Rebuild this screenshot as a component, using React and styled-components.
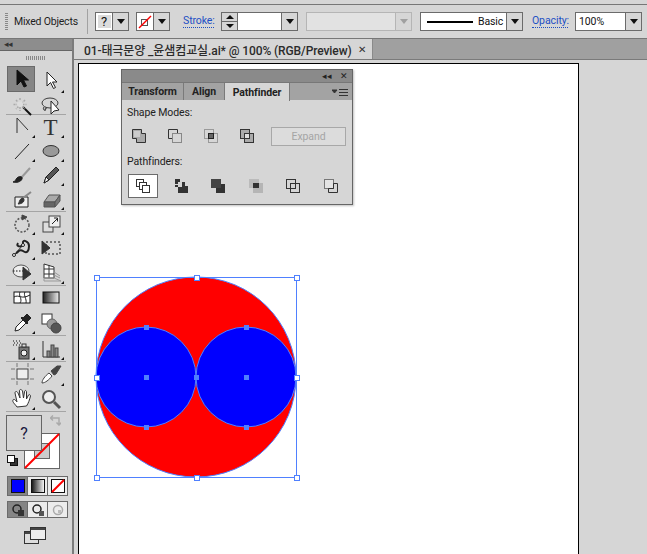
import React from "react"
import styled, { createGlobalStyle } from "styled-components"

const GRAY = "#d6d6d6"
const LINE = "#6b6b6b"
const SEL = "#4f80ff"

const Global = createGlobalStyle`
	html, body { margin: 0; padding: 0; background: ${GRAY}; }
	body { font-family: "Roboto", "Noto Sans CJK KR", sans-serif; font-size: 10.5px; letter-spacing: -0.1px; color: #1e1e1e; }
`

const Page = styled.div`
	width: 647px;
	height: 554px;
	overflow: hidden;
	display: flex;
	flex-direction: column;
	background: ${GRAY};
`

const ControlBar = styled.div`
	height: 33px;
	margin-top: 4px;
	border-top: 1px solid #777;
	border-bottom: 1px solid #777;
	display: flex;
	align-items: center;
	padding-left: 5px;
	flex-shrink: 0;
`

const Gripper = styled.div`
	width: 3px;
	height: 17px;
	background: repeating-linear-gradient(to bottom, #888 0 1px, transparent 1px 2px);
`

const BarLabel = styled.span`
	margin-left: 6px;
	width: 70px;
	white-space: nowrap;
	letter-spacing: -0.2px;
`

const BarDivider = styled.div`
	width: 1px;
	height: 25px;
	background: #a2a2a2;
	margin: 0 7px 0 3px;
`

const Combo = styled.div`
	display: flex;
	height: 19px;
	width: ${p => p.$w}px;
	margin-left: ${p => p.$ml || 0}px;
	border: 1px solid ${LINE};
	box-sizing: border-box;
	background: ${p => (p.$off ? "#e2e2e2" : "#fff")};
	${p => p.$off && "border-color: #b5b5b5;"}
`

const ComboBody = styled.div`
	flex: 1;
	min-width: 0;
	display: flex;
	align-items: center;
	justify-content: ${p => (p.$center ? "center" : "flex-start")};
	padding-left: ${p => p.$pl || 0}px;
	color: #111;
`

const Unknown = styled.span`
	width: 13px;
	height: 13px;
	background: #dcdcdc;
	display: flex;
	align-items: center;
	justify-content: center;
	font-size: 13px;
`

const Caret = styled.div`
	width: 15px;
	display: flex;
	align-items: center;
	justify-content: center;
	background: ${GRAY};
	border-left: 1px solid ${p => (p.$off ? "#b5b5b5" : LINE)};
	&::after {
		content: "";
		border-left: 4px solid transparent;
		border-right: 4px solid transparent;
		border-top: 5px solid ${p => (p.$off ? "#a0a0a0" : "#111")};
	}
`

const Spinner = styled.div`
	width: 15px;
	display: flex;
	flex-direction: column;
	background: ${GRAY};
	border-right: 1px solid ${LINE};
`

const SpinStep = styled.div`
	flex: 1;
	display: flex;
	align-items: center;
	justify-content: center;
	& + & { border-top: 1px solid ${LINE}; }
	&::after {
		content: "";
		border-left: 4px solid transparent;
		border-right: 4px solid transparent;
		${p => (p.$up ? "border-bottom: 4px solid #111;" : "border-top: 4px solid #111;")}
	}
`

const LinkLabel = styled.span`
	color: #1d4fc4;
	border-bottom: 1px dotted #1d4fc4;
	line-height: 12px;
	width: ${p => p.$w}px;
	margin-left: ${p => p.$ml}px;
	white-space: nowrap;
`

const StrokeSample = styled.div`
	width: 46px;
	height: 2px;
	background: #000;
	margin-right: 5px;
`

const Main = styled.div`
	flex: 1;
	min-height: 0;
	display: flex;
	position: relative;
`

const ToolPanel = styled.div`
	width: 72px;
	flex-shrink: 0;
	display: flex;
	flex-direction: column;
	border-right: 2px solid #7c7c7c;
`

const ToolHeader = styled.div`
	height: 11px;
	background: #8d8d8d;
	color: #333;
	font-size: 9px;
	line-height: 11px;
	padding-left: 4px;
	letter-spacing: -1px;
	border-bottom: 1px solid #666;
`

const ToolGrip = styled.div`
	width: 20px;
	height: 4px;
	margin: 5px 0 0 26px;
	background: repeating-linear-gradient(to right, #888 0 1px, transparent 1px 2px);
`

const ToolGroup = styled.div`
	display: grid;
	grid-template-columns: 29px 29px;
	grid-auto-rows: 1fr;
	height: ${p => p.$h}px;
	padding-left: 1px;
	margin: ${p => p.$mt || 0}px 6px 0 6px;
	border-bottom: 1px solid #a5a5a5;
`

const Tool = styled.div`
	position: relative;
	display: flex;
	align-items: center;
	justify-content: center;
	box-sizing: border-box;
	${p => p.$on && "background: #858585; border: 1px solid #6a6a6a; margin: 1px 1px 2px 0;"}
	${p => p.$more && `
		&::after {
			content: "";
			position: absolute;
			right: 1px;
			bottom: 1px;
			border-left: 3px solid transparent;
			border-bottom: 3px solid #111;
		}
	`}
`

const TypeGlyph = styled.span`
	font-family: "Liberation Serif", serif;
	font-size: 23px;
	line-height: 23px;
	color: #333;
`

const ColorArea = styled.div`
	position: relative;
	height: 63px;
`

const FillBox = styled.div`
	position: absolute;
	left: 6px;
	top: 3px;
	width: 36px;
	height: 36px;
	box-sizing: border-box;
	background: ${GRAY};
	border: 1px solid #666;
	z-index: 1;
	display: flex;
	align-items: center;
	justify-content: center;
	font-size: 16px;
	color: #16163c;
`

const StrokeBox = styled.svg`
	position: absolute;
	left: 24px;
	top: 21px;
`

const SmallIcon = styled.svg`
	position: absolute;
	left: ${p => p.$x}px;
	top: ${p => p.$y}px;
`

const ModeRow = styled.div`
	display: flex;
	width: 61px;
	height: ${p => p.$h}px;
	margin-left: 7px;
	margin-top: ${p => p.$mt}px;
	border: 1px solid ${LINE};
	box-sizing: border-box;
`

const ModeCell = styled.div`
	flex: 1;
	display: flex;
	align-items: center;
	justify-content: center;
	background: ${p => (p.$on ? "#858585" : "#ececec")};
	& + & { border-left: 1px solid ${LINE}; }
`

const ScreenMode = styled.div`
	margin: 9px 0 0 24px;
	height: 18px;
`

const Workspace = styled.div`
	flex: 1;
	min-width: 0;
	display: flex;
	flex-direction: column;
`

const TabBar = styled.div`
	height: 20px;
	background: #a0a0a0;
	display: flex;
	border-bottom: 1px solid #7a7a7a;
	flex-shrink: 0;
`

const DocTab = styled.div`
	width: 299px;
	background: ${GRAY};
	border-right: 1px solid #8a8a8a;
	display: flex;
	align-items: center;
	justify-content: space-between;
	padding: 0 6px 0 10px;
	box-sizing: border-box;
	font-size: 12px;
	letter-spacing: -0.1px;
	font-weight: 500;
	color: #2b2b2b;
	white-space: nowrap;
`

const CloseMark = styled.span`
	font-size: 10px;
	color: #333;
`

const Pasteboard = styled.div`
	flex: 1;
	min-height: 0;
	background: ${GRAY};
	padding: 3px 0 0 4px;
`

const Artboard = styled.div`
	width: 501px;
	height: 520px;
	background: #fff;
	border: 1px solid #000;
	box-sizing: border-box;
	padding: 207px 0 0 11px;
`

const Panel = styled.div`
	position: absolute;
	left: 121px;
	top: 30px;
	width: 232px;
	height: 136px;
	box-sizing: border-box;
	background: ${GRAY};
	border: 1px solid #666;
	box-shadow: 1px 1px 2px rgba(0, 0, 0, 0.25);
	display: flex;
	flex-direction: column;
`

const PanelTitle = styled.div`
	height: 12px;
	background: #8a8a8a;
	display: flex;
	align-items: center;
	justify-content: flex-end;
	gap: 8px;
	padding-right: 4px;
	font-size: 9px;
	color: #222;
`

const PanelTabs = styled.div`
	height: 17px;
	background: #a3a3a3;
	display: flex;
	align-items: stretch;
	border-top: 1px solid #777;
`

const PanelTab = styled.div`
	display: flex;
	align-items: center;
	justify-content: center;
	box-sizing: border-box;
	width: ${p => p.$w}px;
	font-weight: 700;
	font-size: 10.5px;
	color: #222;
	border-right: 1px solid #7a7a7a;
	${p => p.$on && `background: ${GRAY}; height: 18px;`}
`

const PanelMenu = styled.div`
	margin-left: auto;
	display: flex;
	align-items: center;
	padding-right: 4px;
`

const PanelBody = styled.div`
	padding: 6px 5px 0 5px;
`

const SectionTitle = styled.div`
	line-height: 14px;
	color: #222;
	margin-top: ${p => p.$mt || 0}px;
`

const ShapeRow = styled.div`
	display: flex;
	align-items: center;
	margin: 6px 0 0 -6px;
	height: 20px;
`

const ShapeBtn = styled.div`
	width: 36px;
	display: flex;
	justify-content: center;
`

const ExpandBtn = styled.div`
	width: 75px;
	height: 19px;
	margin-left: 6px;
	box-sizing: border-box;
	border: 1px solid #a8a8a8;
	display: flex;
	align-items: center;
	justify-content: center;
	color: #a5a5a5;
	background: #dcdcdc;
`

const FinderRow = styled.div`
	display: flex;
	margin-top: 5px;
	height: 24px;
	padding-left: 1px;
`

const FinderBtn = styled.div`
	width: 30px;
	flex-shrink: 0;
	margin-right: 7.5px;
	box-sizing: border-box;
	display: flex;
	align-items: center;
	justify-content: center;
	${p => p.$on && `background: #fff; border: 1px solid ${LINE};`}
`

const d = "#3c3c3c"

const Svg = ({ children, s = 24 }) => (
	<svg width={s} height={s} viewBox={`0 0 ${s} ${s}`} fill="none" stroke={d} strokeWidth="1">{children}</svg>
)

const icons = {
	select: <Svg><path d="M8 3v15l4-4 3 6 2.500-1-3-6h5z" fill="#111" stroke="#111" /></Svg>,
	direct: <Svg><path d="M8 4v14l3.500-3.500 3 6 2-1-3-5.500h4.500z" fill="#fff" stroke="#222" /></Svg>,
	wand: (
		<Svg>
			<path d="M13 13l8 8" stroke="#111" strokeWidth="2" />
			<path d="M10 4v13M3.500 10.500h13M6 6l9 9M15 6l-9 9" stroke="#aaa" strokeWidth="1.500" strokeDasharray="2 1" />
			<circle cx="10" cy="10" r="3" fill="#ddd" stroke="none" />
		</Svg>
	),
	lasso: (
		<Svg>
			<ellipse cx="11" cy="9" rx="8" ry="5" />
			<path d="M5 13c-2 3 1 4 2 2s-1-2-1 2" />
			<path d="M12 7v13l3-3 5-1z" fill="#fff" stroke="#222" />
		</Svg>
	),
	pen: <Svg><path d="M7 3v15M7 3l11 12" stroke="#333" /></Svg>,
	line: <Svg><path d="M5 20L19 5" stroke="#222" /></Svg>,
	ellipse: <Svg><ellipse cx="12" cy="12" rx="8" ry="5.500" fill="#999" stroke="#333" /></Svg>,
	brush: (
		<Svg>
			<path d="M11 15L20 5" stroke="#999" strokeWidth="2" />
			<path d="M3 19c3 1 8 0 9-3s-3-3-5-1-1 3-4 4z" fill="#222" stroke="#222" />
		</Svg>
	),
	pencil: <Svg><path d="M5 20l2-6L17 4l3 3L10 17z" fill="#555" stroke="#222" /><path d="M5 20l2-6 3 3z" fill="#eee" stroke="#222" /></Svg>,
	blob: (
		<Svg>
			<path d="M5 10h13v10H5z" fill="#eee" stroke="#222" />
			<path d="M21 5l-8 6" stroke="#888" strokeWidth="2" />
			<path d="M8 17c2 0 6-1 6-4s-3-2-4 0-1 3-2 4z" fill="#333" stroke="#333" />
		</Svg>
	),
	eraser: <Svg><path d="M5 15l5-7h11l-5 7z" fill="#aaa" stroke="#555" /><path d="M5 15v5h11v-5z" fill="#666" stroke="#555" /><path d="M16 15v5l5-6v-6z" fill="#777" stroke="#555" /></Svg>,
	rotate: (
		<Svg>
			<circle cx="12" cy="13" r="7" stroke="#555" strokeWidth="1.500" strokeDasharray="2 1.500" />
			<path d="M12 3l5 2-5 3z" fill="#444" stroke="#444" />
		</Svg>
	),
	scale: (
		<Svg>
			<rect x="4" y="10" width="10" height="10" fill="#ddd" stroke="#444" />
			<rect x="10" y="4" width="11" height="11" fill="#eee" stroke="#444" />
			<path d="M13 12l5-5M15 6h3.500v3.500" stroke="#222" />
		</Svg>
	),
	warp: (
		<Svg>
			<path d="M8 7c-3 5 6 4 5 0s6-2 6 3-2 8-6 5-5 2-7 2" stroke="#222" strokeWidth="2" />
			<path d="M3 20L14 8" stroke="#222" />
			<circle cx="4" cy="19" r="1.500" fill="#fff" stroke="#222" />
			<circle cx="13" cy="9" r="1.500" fill="#fff" stroke="#222" />
		</Svg>
	),
	free: (
		<Svg>
			<rect x="7" y="6" width="14" height="12" strokeDasharray="2 2" stroke="#111" />
			<path d="M3 5v13l8-6z" fill="#333" stroke="#333" />
		</Svg>
	),
	builder: (
		<Svg>
			<ellipse cx="11" cy="10" rx="8" ry="6" stroke="#555" fill="#eee" />
			<path d="M3 10h11" stroke="#111" strokeDasharray="1.500 1.500" />
			<path d="M13 6v13l8-6z" fill="#333" stroke="#333" />
		</Svg>
	),
	perspective: (
		<Svg>
			<path d="M5 3l10 3v11H5z" fill="#fff" stroke="#333" />
			<path d="M5 8h10M5 13h10M10 4v13" stroke="#333" />
			<path d="M5 17h10l7 3H5zM15 14l6 3M15 11l6 4" stroke="#999" />
		</Svg>
	),
	mesh: (
		<Svg>
			<rect x="4" y="6" width="16" height="11" fill="#fff" stroke="#111" />
			<path d="M4 11c5-3 7 3 16-2M10 6c-2 4 3 7 0 11M15 6c-2 3 2 7 1 11" stroke="#222" />
		</Svg>
	),
	gradient: (
		<Svg>
			<defs>
				<linearGradient id="tg"><stop offset="0" stopColor="#222" /><stop offset="1" stopColor="#eee" /></linearGradient>
			</defs>
			<rect x="4" y="6" width="16" height="11" fill="url(#tg)" stroke="#111" />
		</Svg>
	),
	dropper: (
		<Svg>
			<path d="M5 20l1-4 7-7 3 3-7 7z" fill="#fff" stroke="#222" />
			<path d="M13 7l4-4 4 4-4 4 1 1-1 1-6-6 1-1z" fill="#222" stroke="#222" />
		</Svg>
	),
	blend: (
		<Svg>
			<rect x="3" y="3" width="10" height="10" fill="#fff" stroke="#333" />
			<circle cx="13" cy="13" r="5" fill="#999" stroke="#666" />
			<circle cx="17" cy="17" r="5" fill="#555" stroke="#444" />
		</Svg>
	),
	symbol: (
		<Svg>
			<path d="M3 4h1M6 4h1M9 4h1M4 6h1M7 6h1M10 6h1M3 8h1M6 8h1M9 8h1" stroke="#111" />
			<rect x="9" y="10" width="10" height="12" fill="#777" stroke="#333" />
			<rect x="12" y="7" width="4" height="3" fill="#ddd" stroke="#333" />
			<circle cx="14" cy="16" r="3" fill="#eee" stroke="#222" />
		</Svg>
	),
	graph: (
		<Svg>
			<path d="M4 4v16h17" stroke="#333" />
			<rect x="8" y="14" width="3" height="6" fill="#888" stroke="#444" />
			<rect x="12" y="8" width="3" height="12" fill="#888" stroke="#444" />
			<rect x="16" y="11" width="3" height="9" fill="#888" stroke="#444" />
		</Svg>
	),
	artboard: (
		<Svg>
			<rect x="7" y="7" width="11" height="10" fill="#eee" stroke="#444" />
			<path d="M1 7h4M20 7h4M1 17h4M20 17h4M7 1v4M18 1v4M7 19v4M18 19v4" stroke="#777" />
		</Svg>
	),
	slice: (
		<Svg>
			<path d="M3 21c0-3 3-7 7-10l3 3c-3 4-7 7-10 7z" fill="#fff" stroke="#444" />
			<path d="M12 9l6-5h4l-5 8-2 1z" fill="#444" stroke="#444" />
		</Svg>
	),
	hand: (
		<Svg>
			<path d="M7 20c-2-3-5-5-4-7s3 1 4 2L5 6c0-2 2-2 3 0l2 5-0.500-7c0-2 2-2 3 0l1 7 1-6c0-2 2-2 2 0l0 7 2-4c1-1 2 0 2 1-1 4-2 7-4 10z" fill="#fff" stroke="#333" />
		</Svg>
	),
	zoom: (
		<Svg>
			<circle cx="10" cy="10" r="6" fill="#eee" stroke="#555" strokeWidth="2" />
			<path d="M15 15l6 6" stroke="#555" strokeWidth="3" />
		</Svg>
	),
}

const toolGroups = [
	{ h: 49, mt: 5, tools: [["select", 0, 1], ["direct", 1], ["wand"], ["lasso"]] },
	{ h: 96, tools: [["pen", 1], ["T", 1], ["line", 1], ["ellipse", 1], ["brush"], ["pencil", 1], ["blob"], ["eraser", 1]] },
	{ h: 73, tools: [["rotate", 1], ["scale", 1], ["warp", 1], ["free"], ["builder", 1], ["perspective", 1]] },
	{ h: 49, tools: [["mesh"], ["gradient"], ["dropper", 1], ["blend"]] },
	{ h: 25, tools: [["symbol", 1], ["graph", 1]] },
	{ h: 49, tools: [["artboard"], ["slice", 1], ["hand", 1], ["zoom"]] },
]

const ToolBox = () => (
	<ToolPanel>
		<ToolHeader>◂◂</ToolHeader>
		<ToolGrip />
		{toolGroups.map((g, i) => (
			<ToolGroup key={i} $h={g.h} $mt={g.mt}>
				{g.tools.map(([name, more, on]) => (
					<Tool key={name} $more={more} $on={on}>
						{name === "T" ? <TypeGlyph>T</TypeGlyph> : icons[name]}
					</Tool>
				))}
			</ToolGroup>
		))}
		<ColorArea>
			<FillBox>?</FillBox>
			<StrokeBox width="36" height="36" viewBox="0 0 36 36">
				<rect x="0.500" y="0.500" width="35" height="35" fill="#fff" stroke="#666" />
				<rect x="10.500" y="10.500" width="15" height="15" fill="#ccc" stroke="#666" />
				<path d="M1 35L35 1" stroke="#f00" strokeWidth="2" />
			</StrokeBox>
			<SmallIcon $x={50} $y={3} width="11" height="11" viewBox="0 0 11 11" fill="none" stroke="#aaa" strokeWidth="1.500">
				<path d="M1 3h8v7M3 0.500L0.500 3 3 5.500M6.500 7.500L9 10l2.500-2.500" />
			</SmallIcon>
			<SmallIcon $x={7} $y={43} width="11" height="11" viewBox="0 0 11 11">
				<rect x="3.500" y="3.500" width="7" height="7" fill="#333" stroke="#111" />
				<rect x="0.500" y="0.500" width="7" height="7" fill="#fff" stroke="#111" />
			</SmallIcon>
		</ColorArea>
		<ModeRow $h={20} $mt={1}>
			<ModeCell $on>
				<svg width="14" height="14"><rect x="0.500" y="0.500" width="13" height="13" fill="#00f" stroke="#111" /></svg>
			</ModeCell>
			<ModeCell>
				<svg width="14" height="14">
					<defs><linearGradient id="mg"><stop offset="0" stopColor="#111" /><stop offset="1" stopColor="#fff" /></linearGradient></defs>
					<rect x="0.500" y="0.500" width="13" height="13" fill="url(#mg)" stroke="#111" />
				</svg>
			</ModeCell>
			<ModeCell>
				<svg width="14" height="14">
					<rect x="0.500" y="0.500" width="13" height="13" fill="#fff" stroke="#111" />
					<path d="M1 13L13 1" stroke="#f00" strokeWidth="2" />
				</svg>
			</ModeCell>
		</ModeRow>
		<ModeRow $h={17} $mt={5}>
			<ModeCell $on>
				<svg width="14" height="14" fill="none"><circle cx="6" cy="6" r="4" stroke="#222" strokeWidth="1.500" /><rect x="7" y="7" width="6" height="6" fill="#333" /></svg>
			</ModeCell>
			<ModeCell>
				<svg width="14" height="14" fill="none"><circle cx="6" cy="6" r="4" stroke="#222" strokeWidth="1.500" /><rect x="8" y="8" width="5" height="5" fill="#555" /></svg>
			</ModeCell>
			<ModeCell>
				<svg width="14" height="14" fill="none"><circle cx="7" cy="7" r="4.500" stroke="#aaa" strokeWidth="1.500" /><rect x="7" y="7" width="3" height="3" fill="#bbb" /></svg>
			</ModeCell>
		</ModeRow>
		<ScreenMode>
			<svg width="22" height="17" viewBox="0 0 22 17">
				<rect x="0.500" y="4.500" width="14" height="12" fill="#ddd" stroke="#333" />
				<path d="M1 5h13v2H1z" fill="#444" />
				<rect x="6.500" y="0.500" width="15" height="12" fill="#eee" stroke="#333" />
				<path d="M7 1h14v2H7z" fill="#444" />
			</svg>
		</ScreenMode>
	</ToolPanel>
)

const Mode = ({ children }) => (
	<svg width="16" height="16" viewBox="0 0 16 16" fill="none" strokeWidth="1">{children}</svg>
)

const shapeIcons = [
	<Mode key="a">
		<path d="M1.500 1.500h9v4h4v9h-9v-4h-4z" fill="#aaa" stroke="#333" />
		<path d="M3 3h6v6H3z" fill="#ccc" />
	</Mode>,
	<Mode key="b">
		<path d="M5.500 10.500h-4v-9h9v4" stroke="#333" />
		<rect x="5.500" y="5.500" width="9" height="9" stroke="#888" />
	</Mode>,
	<Mode key="c">
		<rect x="1.500" y="1.500" width="9" height="9" stroke="#999" />
		<rect x="5.500" y="5.500" width="9" height="9" stroke="#999" />
		<rect x="5.500" y="5.500" width="5" height="5" stroke="#222" fill="#666" />
	</Mode>,
	<Mode key="d">
		<rect x="1.500" y="1.500" width="9" height="9" stroke="#333" fill="#aaa" />
		<rect x="5.500" y="5.500" width="9" height="9" stroke="#333" fill="#aaa" />
		<rect x="5.500" y="5.500" width="5" height="5" stroke="#333" fill="#ddd" />
	</Mode>,
]

const finderIcons = [
	<Mode key="a">
		<rect x="1.500" y="1.500" width="7" height="7" stroke="#333" />
		<rect x="4.500" y="4.500" width="7" height="7" stroke="#333" fill="#fff" />
		<rect x="7.500" y="7.500" width="7" height="7" stroke="#333" fill="#fff" />
	</Mode>,
	<Mode key="b">
		<path d="M2 1h5v3H5v2H2z" fill="#333" />
		<path d="M9 4h3v4h3v7H5V9h4z" fill="#333" />
		<path d="M2 7h3v2H2z" fill="#333" />
	</Mode>,
	<Mode key="c">
		<rect x="1" y="1" width="10" height="9" fill="#444" />
		<path d="M11 6h4v9H6v-5h5z" fill="#333" />
	</Mode>,
	<Mode key="d">
		<rect x="1" y="1" width="10" height="9" fill="#bbb" />
		<rect x="5" y="5" width="10" height="10" fill="#b5b5b5" />
		<rect x="5" y="5" width="6" height="5" fill="#333" />
	</Mode>,
	<Mode key="e">
		<rect x="1.500" y="1.500" width="9" height="9" stroke="#333" />
		<rect x="5.500" y="5.500" width="9" height="9" stroke="#333" />
		<rect x="5.500" y="5.500" width="5" height="5" stroke="#333" fill={GRAY} />
	</Mode>,
	<Mode key="f">
		<rect x="1.500" y="1.500" width="9" height="9" stroke="#777" fill="#e4e4e4" />
		<path d="M10.500 5.500h4v9h-9v-4h5z" stroke="#333" />
	</Mode>,
]

const PathfinderPanel = () => (
	<Panel>
		<PanelTitle>
			<span>◂◂</span>
			<span>✕</span>
		</PanelTitle>
		<PanelTabs>
			<PanelTab $w={62}>Transform</PanelTab>
			<PanelTab $w={41}>Align</PanelTab>
			<PanelTab $w={65} $on>Pathfinder</PanelTab>
			<PanelMenu>
				<svg width="16" height="8" viewBox="0 0 16 8" fill="none" stroke="#333">
					<path d="M0 2h5l-2.500 3z" fill="#333" />
					<path d="M7 1.500h9M7 4.500h9M7 7.500h9" />
				</svg>
			</PanelMenu>
		</PanelTabs>
		<PanelBody>
			<SectionTitle>Shape Modes:</SectionTitle>
			<ShapeRow>
				{shapeIcons.map((icon, i) => <ShapeBtn key={i}>{icon}</ShapeBtn>)}
				<ExpandBtn>Expand</ExpandBtn>
			</ShapeRow>
			<SectionTitle $mt={9}>Pathfinders:</SectionTitle>
			<FinderRow>
				{finderIcons.map((icon, i) => <FinderBtn key={i} $on={i === 0}>{icon}</FinderBtn>)}
			</FinderRow>
		</PanelBody>
	</Panel>
)

const handles = [[96, 277], [196, 277], [296, 277], [96, 377], [296, 377], [96, 477], [196, 477], [296, 477]]
const anchors = [[146, 327], [246, 327], [146, 427], [246, 427], [146, 377], [246, 377], [196, 377]]

const Artwork = () => (
	<svg width="212" height="212" viewBox="90 271 212 212" style={{ display: "block" }}>
		<circle cx="196" cy="377" r="100" fill="#f00" stroke={SEL} />
		<circle cx="146" cy="377" r="50" fill="#00f" stroke={SEL} />
		<circle cx="246" cy="377" r="50" fill="#00f" stroke={SEL} />
		<rect x="96.500" y="277.500" width="200" height="200" fill="none" stroke={SEL} />
		{anchors.map(([x, y]) => <rect key={`${x}-${y}`} x={x - 2} y={y - 2} width="5" height="5" fill={SEL} />)}
		{handles.map(([x, y]) => (
			<rect key={`${x}-${y}`} x={x - 2 + 0.5} y={y - 2 + 0.5} width="5" height="5" fill="#fff" stroke={SEL} />
		))}
	</svg>
)

export default function App() {
	return (
		<Page>
			<Global />
			<ControlBar>
				<Gripper />
				<BarLabel>Mixed Objects</BarLabel>
				<BarDivider />
				<Combo $w={34}>
					<ComboBody $center><Unknown>?</Unknown></ComboBody>
					<Caret />
				</Combo>
				<Combo $w={34} $ml={7}>
					<ComboBody $center>
						<svg width="14" height="14" viewBox="0 0 14 14">
							<rect x="3.500" y="4.500" width="6" height="6" fill="none" stroke="#555" />
							<path d="M1 13L13 1" stroke="#f00" strokeWidth="1.500" />
						</svg>
					</ComboBody>
					<Caret />
				</Combo>
				<LinkLabel $ml={13} $w={31}>Stroke:</LinkLabel>
				<Combo $w={77} $ml={7}>
					<Spinner>
						<SpinStep $up />
						<SpinStep />
					</Spinner>
					<ComboBody />
					<Caret />
				</Combo>
				<Combo $w={106} $ml={8} $off>
					<ComboBody />
					<Caret $off />
				</Combo>
				<Combo $w={103} $ml={8}>
					<ComboBody $pl={6}>
						<StrokeSample />
						Basic
					</ComboBody>
					<Caret />
				</Combo>
				<LinkLabel $ml={9} $w={36}>Opacity:</LinkLabel>
				<Combo $w={67} $ml={7}>
					<ComboBody $pl={3}>100%</ComboBody>
					<Caret />
				</Combo>
			</ControlBar>
			<Main>
				<ToolBox />
				<Workspace>
					<TabBar>
						<DocTab>
							01-태극문양 _윤샘컴교실.ai* @ 100% (RGB/Preview)
							<CloseMark>✕</CloseMark>
						</DocTab>
					</TabBar>
					<Pasteboard>
						<Artboard>
							<Artwork />
						</Artboard>
					</Pasteboard>
				</Workspace>
				<PathfinderPanel />
			</Main>
		</Page>
	)
}
